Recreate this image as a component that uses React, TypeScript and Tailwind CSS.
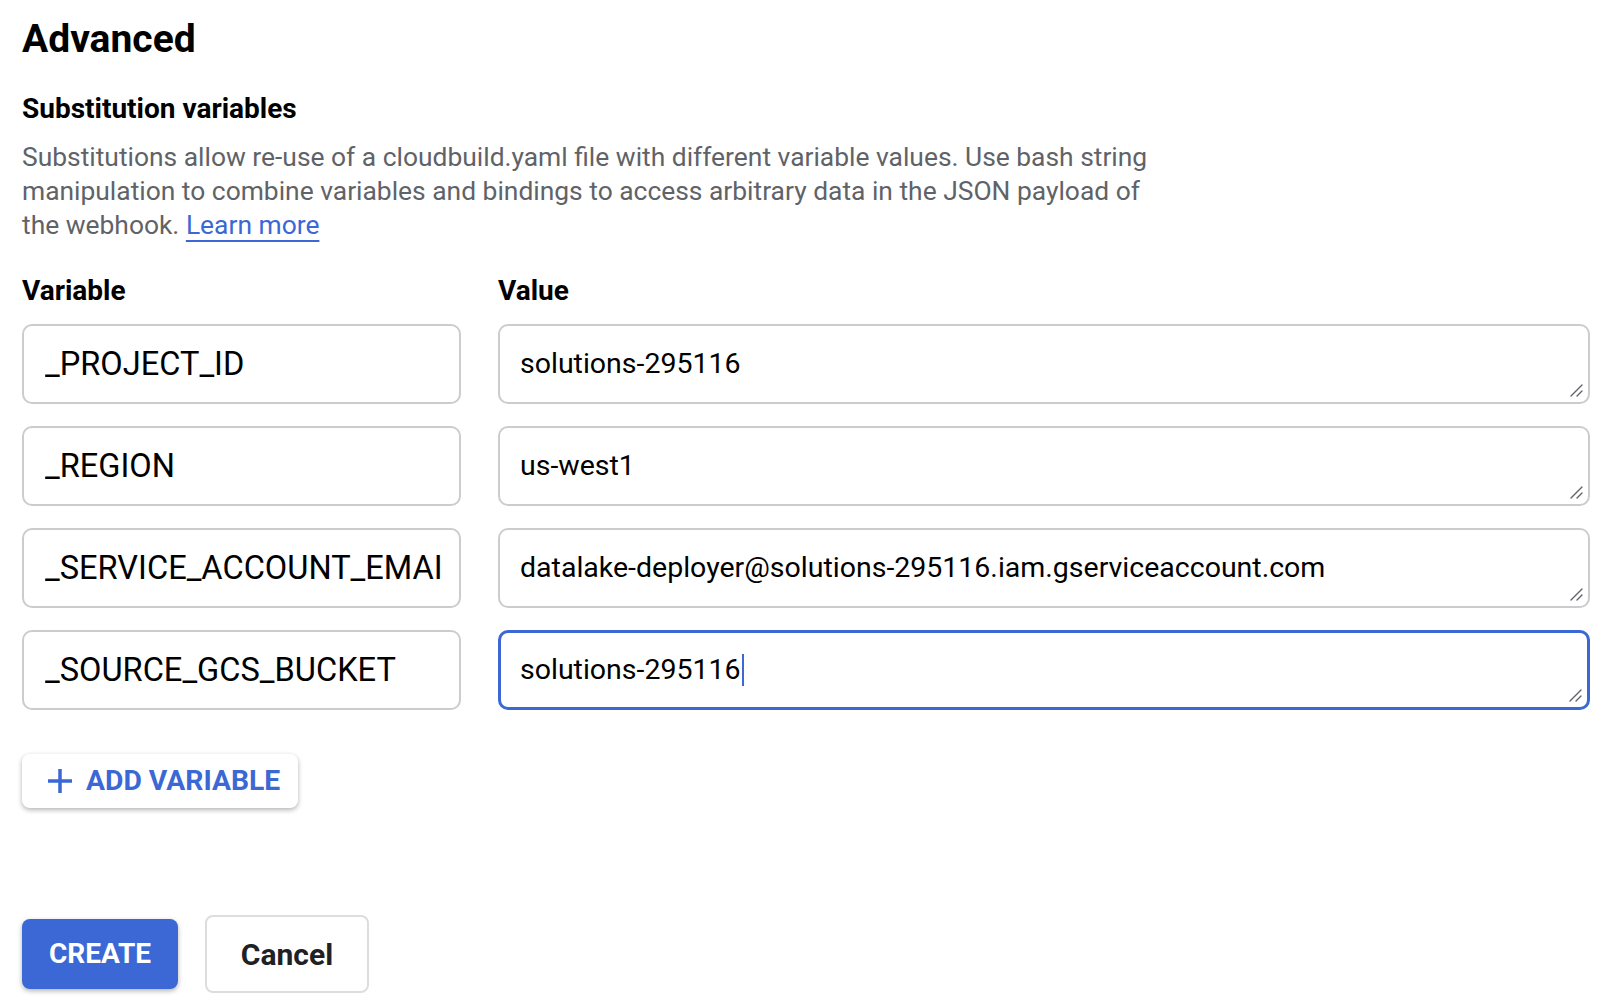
import React from "react";

const rows = [
  { name: "_PROJECT_ID", value: "solutions-295116" },
  { name: "_REGION", value: "us-west1" },
  { name: "_SERVICE_ACCOUNT_EMAIL", value: "datalake-deployer@solutions-295116.iam.gserviceaccount.com" },
  { name: "_SOURCE_GCS_BUCKET", value: "solutions-295116", focused: true },
];

const ResizeHandle = () => (
  <svg className="absolute right-[5px] bottom-[5px]" width="14" height="14" viewBox="0 0 14 14">
    <path d="M13 2 L2 13 M13 8 L8 13" stroke="#5f6368" strokeWidth="1.4" strokeLinecap="round" />
  </svg>
);

const App = () => {
  return (
    <div className="min-h-screen w-full bg-white px-[22px] pt-[16px] font-['Roboto','Liberation_Sans',sans-serif] text-[#202124]">
      <h1 className="text-[39px] leading-[46px] font-bold text-black">Advanced</h1>

      <h2 className="mt-[30px] text-[28px] leading-[34px] font-bold text-black">
        Substitution variables
      </h2>
      <p className="mt-[14px] w-[1150px] text-[26.4px] leading-[34px] text-[#5f6368]">
        Substitutions allow re-use of a cloudbuild.yaml file with different variable values. Use bash string
        manipulation to combine variables and bindings to access arbitrary data in the JSON payload of the
        webhook.{" "}
        <a href="#" className="text-[#3b68d4] underline underline-offset-[6px] decoration-[1.5px]">
          Learn more
        </a>
      </p>

      <div className="mt-[32px] grid grid-cols-[439px_1092px] gap-x-[37px]">
        <div className="text-[28px] leading-[34px] font-bold text-black">Variable</div>
        <div className="text-[28px] leading-[34px] font-bold text-black">Value</div>
      </div>

      <div className="mt-[16px] flex flex-col gap-[22px]">
        {rows.map((r) => (
          <div key={r.name} className="grid grid-cols-[439px_1092px] gap-x-[37px]">
            <div className="flex h-[80px] items-center overflow-hidden whitespace-nowrap rounded-[10px] border-2 border-[#cccccc] pl-[21px] pr-[16px] text-[32.6px] text-black">
              <span className="block overflow-hidden">{r.name}</span>
            </div>
            <div
              className={
                r.focused
                  ? "relative flex h-[80px] items-center whitespace-nowrap rounded-[10px] border-[3px] border-[#3b68d4] pl-[19px] text-[28.5px] text-black"
                  : "relative flex h-[80px] items-center whitespace-nowrap rounded-[10px] border-2 border-[#cccccc] pl-[20px] text-[28.5px] text-black"
              }
            >
              <span>{r.value}</span>
              {r.focused && <span className="ml-[1px] inline-block h-[32px] w-[2px] bg-[#3b68d4]" />}
              <ResizeHandle />
            </div>
          </div>
        ))}
      </div>

      <button className="mt-[44px] flex h-[54px] w-[276px] items-center gap-[12px] rounded-[8px] bg-white pl-[24px] text-[28.3px] font-bold text-[#3b68d4] shadow-[0_2px_5px_rgba(0,0,0,0.3)]">
        <svg width="28" height="28" viewBox="0 0 28 28">
          <path d="M14 2 V26 M2 14 H26" stroke="#3b68d4" strokeWidth="3.5" />
        </svg>
        ADD VARIABLE
      </button>

      <div className="mt-[107px] flex items-center gap-[27px]">
        <button className="h-[70px] w-[156px] rounded-[8px] bg-[#3b68d4] text-[28px] font-bold text-white shadow-[0_2px_5px_rgba(0,0,0,0.3)]">
          CREATE
        </button>
        <button className="h-[78px] w-[164px] rounded-[8px] border-2 border-[#dddddd] bg-white text-[30px] font-bold text-[#202124]">
          Cancel
        </button>
      </div>
    </div>
  );
};

export default App;
